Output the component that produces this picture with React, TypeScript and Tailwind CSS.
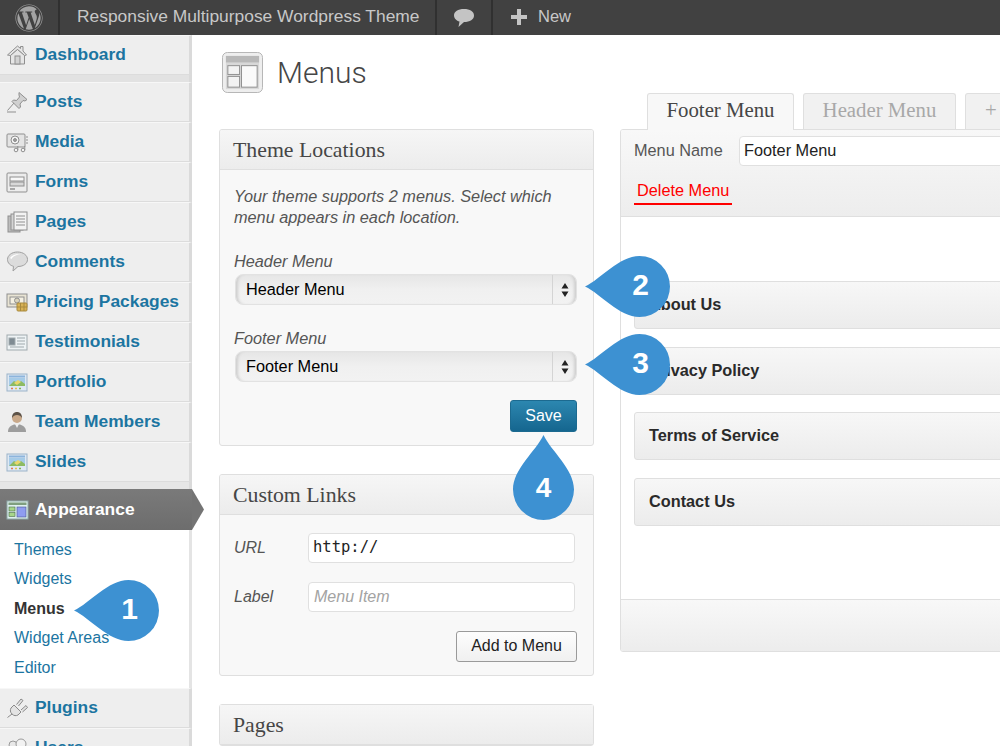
import React from 'react';
import { FaWordpress } from 'react-icons/fa';

const sans = "font-['Liberation_Sans',Arial,sans-serif]";
const serif = "font-['Liberation_Serif',Georgia,serif]";

const line = '#8f8f8f';

const icons: Record<string, React.ReactNode> = {
  home: (
    <g fill="#e6e6e6" stroke={line}>
      <path d="M1.5 12 11.5 3l3 2.5V3.5h2.500v4.500l3.500 4-2 .5-7-6-7 6z" />
      <path d="M4.500 12.500v8.500h14v-8.500l-7-6z" />
      <rect x="9" y="13" width="5" height="8" fill="#d2d2d2" />
    </g>
  ),
  pin: (
    <g stroke={line} strokeLinejoin="round">
      <path d="M13 2.500l8 7-2 1.500-2-.5-3 3.500.5 3-1.500 1.500-7-7 1.500-1.500 3 .5 3-3.500-.5-2z" fill="#d0d0d0" />
      <path d="M8 13 1.500 20.500M1 22h9" fill="none" />
    </g>
  ),
  media: (
    <g stroke={line} fill="#e4e4e4">
      <rect x="1" y="4" width="18" height="13" rx="1" />
      <circle cx="9" cy="10" r="4" fill="#f4f4f4" />
      <circle cx="9" cy="10" r="1.500" fill="#9c9c9c" />
      <path d="M20 7h2M20 10h2M20 13h2" fill="none" />
      <circle cx="10" cy="20" r="1.800" fill="#f4f4f4" />
      <circle cx="17" cy="20" r="1.800" fill="#f4f4f4" />
      <path d="M11.800 20v-4M18.800 20v-4" fill="none" />
    </g>
  ),
  forms: (
    <g stroke={line}>
      <rect x="1" y="3" width="20" height="19" rx="1" fill="#ededed" />
      <rect x="4" y="7" width="14" height="4" fill="#f8f8f8" />
      <rect x="4" y="12" width="14" height="4" fill="#d8d8d8" />
      <path d="M4 19h5" fill="none" strokeWidth="1.500" />
    </g>
  ),
  pages: (
    <g stroke={line}>
      <rect x="2" y="6" width="12" height="16" fill="#bdbdbd" />
      <rect x="5" y="4" width="12" height="16" fill="#d5d5d5" />
      <rect x="8" y="2" width="13" height="18" fill="#f3f3f3" />
      <path d="M10 6h9M10 9h9M10 12h9M10 15h9" fill="none" />
    </g>
  ),
  comment: (
    <g>
      <path d="M11.500 2C5.500 2 1.500 5.500 1.500 9.500c0 3.500 2.800 6 6 6.800L7 21l5-4.500c5.500 0 9.500-3 9.500-7S17.500 2 11.500 2z" fill="#dcdcdc" stroke="#a0a0a0" />
      <path d="M4 8c2-3 6-4.500 11-3.500-5 0-8 1.500-9.500 4.500z" fill="#fff" />
    </g>
  ),
  pricing: (
    <g stroke={line}>
      <rect x="1" y="4" width="20" height="13" fill="#e9e4d4" />
      <rect x="4" y="7" width="14" height="7" fill="#f4f0e2" />
      <circle cx="11" cy="10.500" r="2.500" fill="#d9d3bd" />
      <rect x="11" y="13" width="10" height="8" rx="1" fill="#d8b255" stroke="#a98a3e" />
      <path d="M11 17h10M14.500 13v8M18 13v8" stroke="#a98a3e" fill="none" />
    </g>
  ),
  card: (
    <g stroke="#9fa9ad">
      <rect x="1" y="5" width="20" height="15" fill="#eef3f5" />
      <rect x="3" y="8" width="6" height="7" fill="#7f8b93" />
      <path d="M11 8h8M11 11h8M11 14h8M4 17h14" fill="none" />
    </g>
  ),
  screen: (
    <g>
      <rect x="1" y="4" width="20" height="17" fill="#dfe9f3" stroke="#9cb3c9" />
      <rect x="3" y="5.500" width="16" height="2" fill="#8cb4dc" />
      <rect x="3" y="8" width="16" height="8" fill="#a5cbe8" />
      <path d="M3 16l5-5 4 2 3-2 4 3v2z" fill="#8dbb62" />
      <path d="M8 13l4-3 3 2-4 3z" fill="#e9d66b" />
      <path d="M5 18.500h2" stroke="#e07a5a" strokeWidth="1.500" />
      <path d="M9 18.500h2" stroke="#e8c14d" strokeWidth="1.500" />
      <path d="M13 18.500h2" stroke="#7fb65a" strokeWidth="1.500" />
    </g>
  ),
  team: (
    <g>
      <path d="M2 22c0-5 3-6.500 6-7.500h6c3 1 6 2.500 6 7.500z" fill="#9d9d9d" />
      <path d="M9 14l2 4 2-4z" fill="#eee" />
      <circle cx="11" cy="8" r="5" fill="#c9a98a" />
      <path d="M6 8c0-4 2-6 5-6s5 2 5 6c-1-2-3-3-5-3s-4 1-5 3z" fill="#5d5348" />
    </g>
  ),
  appearance: (
    <g>
      <rect x="1" y="3" width="21" height="18" fill="#dff1ef" stroke="#8fa9a7" />
      <rect x="2.500" y="4.500" width="18" height="2.500" fill="#7f9f7f" />
      <rect x="3" y="9" width="6" height="4" fill="#a7d68a" stroke="#4b6b4b" strokeWidth=".6" />
      <rect x="3" y="14.500" width="6" height="4" fill="#a7d68a" stroke="#4b6b4b" strokeWidth=".6" />
      <rect x="11" y="9" width="9" height="10" fill="#8f9df0" stroke="#4a568f" strokeWidth=".6" />
    </g>
  ),
  plugin: (
    <g stroke="#8a8a8a" fill="#e3e3e3" strokeLinejoin="round">
      <path d="M8 9l7 7-3 3c-2 1-4 1-6-1s-2-4-1-6z" />
      <path d="M10.500 8.500 15 3l2 1.500-4.500 5.500M15 14l5-4.500 1.500 2-5 4.500" />
      <path d="M6 18l-4.500 3.500" fill="none" />
    </g>
  ),
  users: (
    <g stroke="#9a9a9a" fill="#e8e8e8">
      <circle cx="7" cy="9" r="4" />
      <circle cx="15" cy="8" r="5" fill="#f2f2f2" />
    </g>
  ),
};

function Icon({ name }: { name: string }) {
  return (
    <svg viewBox="0 0 23 24" className="h-6 w-[23px] shrink-0">
      {icons[name]}
    </svg>
  );
}

function NavItem({ icon, label }: { icon: string; label: string }) {
  return (
    <a className="flex h-10 shrink-0 items-center gap-[6px] border-t border-b border-t-[#f7f7f7] border-b-[#dcdcdc] border-r-[3px] border-r-[#dadada] bg-[#eeeeee] pl-[6px] text-[17.400px] font-bold text-[#1c75a1]">
      <Icon name={icon} />
      <span className="pb-[2px]">{label}</span>
    </a>
  );
}

function Sidebar() {
  const top = [
    ['pin', 'Posts'],
    ['media', 'Media'],
    ['forms', 'Forms'],
    ['pages', 'Pages'],
    ['comment', 'Comments'],
    ['pricing', 'Pricing Packages'],
    ['card', 'Testimonials'],
    ['screen', 'Portfolio'],
    ['team', 'Team Members'],
    ['screen', 'Slides'],
  ];
  const sub = ['Themes', 'Widgets', 'Menus', 'Widget Areas', 'Editor'];
  return (
    <aside className="flex w-[192px] shrink-0 flex-col">
      <NavItem icon="home" label="Dashboard" />
      <div className="h-[7px] shrink-0 border-r-[3px] border-r-[#dadada] bg-[#e2e2e2]" />
      {top.map(([icon, label]) => (
        <NavItem key={label} icon={icon} label={label} />
      ))}
      <div className="h-[7px] shrink-0 border-r-[3px] border-r-[#dadada] bg-[#e6e6e6]" />
      <a className="relative flex h-[41px] shrink-0 items-center gap-[6px] bg-gradient-to-b from-[#7a7a7a] to-[#6d6d6d] pl-[6px] text-[17.400px] font-bold text-white">
        <Icon name="appearance" />
        <span>Appearance</span>
        <svg viewBox="0 0 12 41" className="absolute left-full top-0 h-[41px] w-3">
          <path d="M0 0 12 20.500 0 41z" fill="#747474" />
        </svg>
      </a>
      <div className="flex h-[158px] shrink-0 flex-col gap-[7.500px] border-r-[3px] border-r-[#e4e4e4] bg-white pl-[14px] pt-[8.500px] text-base leading-[22px] text-[#1c75a1]">
        {sub.map((s) => (
          <a key={s} className={s === 'Menus' ? 'font-bold text-[#333]' : ''}>
            {s}
          </a>
        ))}
      </div>
      <NavItem icon="plugin" label="Plugins" />
      <NavItem icon="users" label="Users" />
    </aside>
  );
}

function TopBar() {
  return (
    <header className="flex h-[35px] shrink-0 items-center bg-[#414141] text-[#c8c8c8]">
      <div className="flex h-full w-[60px] items-center justify-center border-r-2 border-r-[#303030]">
        <span className="flex h-[28px] w-[28px] items-center justify-center">
          <FaWordpress className="h-[28px] w-[28px] text-[#a3a3a3]" />
        </span>
      </div>
      <div className="flex h-full w-[377px] items-center border-r-2 border-r-[#303030] pb-[3px] pl-[17px] text-[17.400px]">
        Responsive Multipurpose Wordpress Theme
      </div>
      <div className="flex h-full w-[56px] items-center justify-center border-r-2 border-r-[#303030]">
        <svg viewBox="0 0 22 20" className="h-5 w-[22px]">
          <path d="M11 1C5 1 1 3.600 1 7.500c0 3 2.500 5.300 5.500 6L5.500 19l5.500-5c6 0 10-2.600 10-6.500S17 1 11 1z" fill="#c4c4c4" />
        </svg>
      </div>
      <div className="flex h-full items-center gap-[11px] pb-[2px] pl-[18px] text-[16.500px]">
        <svg viewBox="0 0 16 16" className="h-4 w-4">
          <path d="M6 0h4v6h6v4h-6v6H6v-6H0V6h6z" fill="#c4c4c4" />
        </svg>
        New
      </div>
    </header>
  );
}

function PanelHeader({ title }: { title: string }) {
  return (
    <div className={`flex h-[40px] items-center border-b border-b-[#dfdfdf] bg-gradient-to-b from-[#f6f6f6] to-[#ececec] pl-[13px] pt-[2px] text-[21.800px] leading-none text-[#464646] ${serif}`}>
      {title}
    </div>
  );
}

function FakeSelect({ value }: { value: string }) {
  return (
    <div className="ml-px flex h-[31px] w-[342px] items-stretch rounded-[8px] border border-[#e2e2e2] bg-gradient-to-b from-[#e6e6e6] via-[#f0f0f0] to-[#f2f2f2] text-[16.300px] text-black shadow-[inset_4px_0_3px_-2px_#cfcfcf,inset_-4px_0_3px_-2px_#cfcfcf]">
      <span className="flex flex-1 items-center pl-[10px]">{value}</span>
      <span className="flex w-[24px] flex-col items-center justify-center gap-[2px] border-l border-l-[#d4d4d4]">
        <svg viewBox="0 0 8 14" className="h-[14px] w-2">
          <path d="M4 0l3.500 5.500h-7zM4 14l-3.500-5.500h7z" fill="#222" />
        </svg>
      </span>
    </div>
  );
}

function ThemeLocations() {
  return (
    <section className="h-[317px] overflow-hidden rounded-[3px] border border-[#dfdfdf] bg-[#f8f8f8]">
      <PanelHeader title="Theme Locations" />
      <div className="px-[14px] pt-[16px] text-[16.300px] text-[#555]">
        <p className="italic leading-[21px]">
          Your theme supports 2 menus. Select which
          <br />
          menu appears in each location.
        </p>
        <p className="mb-[2px] mt-[22px] italic leading-[22px]">Header Menu</p>
        <FakeSelect value="Header Menu" />
        <p className="mb-[2px] mt-[22px] italic leading-[22px]">Footer Menu</p>
        <FakeSelect value="Footer Menu" />
        <div className="mt-[18px] flex justify-end pr-[2px]">
          <button className="flex h-[32px] w-[67px] items-center justify-center rounded-[3px] border border-[#1c6a90] bg-gradient-to-b from-[#2c87b0] to-[#15668f] text-base text-white">
            Save
          </button>
        </div>
      </div>
    </section>
  );
}

function CustomLinks() {
  return (
    <section className="mt-[28px] h-[202px] overflow-hidden rounded-[3px] border border-[#dfdfdf] bg-[#f8f8f8]">
      <PanelHeader title="Custom Links" />
      <div className="px-[14px] pt-[18px] text-base">
        <div className="flex h-[30px] items-center">
          <span className="w-[74px] italic text-[#555]">URL</span>
          <div className="flex h-[30px] w-[267px] items-center rounded-[4px] border border-[#e0e0e0] bg-white pl-[4px] font-['DejaVu_Sans_Mono',monospace] text-[15.500px] text-[#222]">
            http://
          </div>
        </div>
        <div className="mt-[19px] flex h-[30px] items-center">
          <span className="w-[74px] italic text-[#555]">Label</span>
          <div className="flex h-[30px] w-[267px] items-center rounded-[4px] border border-[#e0e0e0] bg-white pl-[5px] italic text-[#a3a3a3]">
            Menu Item
          </div>
        </div>
        <div className="mt-[19px] flex justify-end pr-[2px]">
          <button className="flex h-[31px] w-[121px] items-center justify-center rounded-[3px] border border-[#9a9a9a] bg-gradient-to-b from-[#fdfdfd] to-[#f0f0f0] pb-[2px] text-base text-[#222]">
            Add to Menu
          </button>
        </div>
      </div>
    </section>
  );
}

function Tabs() {
  return (
    <div className={`flex gap-[9px] pl-[27px] text-[20.800px] leading-none ${serif}`}>
      <div className="relative z-10 -mb-px flex h-[37px] w-[147px] items-center justify-center rounded-t-[3px] border border-b-0 border-[#dfdfdf] bg-[#f8f8f8] pb-[3px] text-[#464646]">
        Footer Menu
      </div>
      <div className="flex h-[36px] w-[153px] items-center justify-center rounded-t-[3px] border border-b-0 border-[#dfdfdf] bg-[#f1f1f1] pb-[3px] text-[#a8a8a8]">
        Header Menu
      </div>
      <div className="flex h-[36px] w-[60px] items-center rounded-t-[3px] border border-b-0 border-[#dfdfdf] bg-[#f1f1f1] pb-[3px] pl-[19px] text-[#a8a8a8]">
        +
      </div>
    </div>
  );
}

function MenuRow({ label }: { label: string }) {
  return (
    <div className="flex h-[48px] w-[400px] items-center rounded-[3px] border border-[#dfdfdf] bg-gradient-to-b from-[#f7f7f7] to-[#ececec] pb-px pl-[14px] text-[16.300px] font-bold text-[#2a2a2a]">
      {label}
    </div>
  );
}

function MenuEditor() {
  const rows = ['About Us', 'Privacy Policy', 'Terms of Service', 'Contact Us'];
  return (
    <section className="h-[523px] w-[420px] overflow-hidden rounded-[3px] border border-[#dfdfdf] bg-white">
      <div className="h-[87px] border-b border-b-[#dfdfdf] bg-gradient-to-b from-[#f8f8f8] to-[#ededed] pl-[13px] pt-[6px] text-[16.300px]">
        <div className="flex items-center">
          <span className="w-[105px] pb-[2px] text-[#555]">Menu Name</span>
          <div className="flex h-[30px] w-[300px] items-center rounded-[4px] border border-[#e0e0e0] bg-white pb-[2px] pl-[4px] text-[#222]">
            Footer Menu
          </div>
        </div>
        <a className="mt-[13px] inline-block border-b-2 border-b-[#ff0000] px-[3px] pb-[2px] leading-[22px] text-[#ff0000]">
          Delete Menu
        </a>
      </div>
      <div className="flex h-[382px] flex-col gap-[17.500px] pl-[13px] pt-[64px]">
        {rows.map((r) => (
          <MenuRow key={r} label={r} />
        ))}
      </div>
      <div className="h-[54px] border-t border-t-[#dfdfdf] bg-gradient-to-b from-[#f8f8f8] to-[#ececec]" />
    </section>
  );
}

// teardrop callouts sit over the page, tip pointing at the control they explain
function Callout({ n, className, up = false }: { n: number; className: string; up?: boolean }) {
  return (
    <div className={`absolute flex items-center justify-center ${className}`}>
      <svg viewBox="0 0 85 61" className={`absolute h-[61px] w-[85px] ${up ? 'rotate-90' : ''}`}>
        <path d="M0 30.500C16 23 34 0 54.500 0a30.500 30.500 0 0 1 0 61C34 61 16 38 0 30.500z" fill="#3d91d2" />
      </svg>
      <span className={`relative font-bold leading-none text-white ${up ? 'mt-[20px] text-[28px]' : 'mb-[4px] ml-[26px] text-[30px]'}`}>{n}</span>
    </div>
  );
}

export default function App() {
  return (
    <div className={`relative flex h-[746px] w-[1000px] flex-col overflow-hidden bg-white ${sans}`}>
      <TopBar />
      <div className="flex min-h-0 flex-1">
        <Sidebar />
        <main className="flex-1 pl-[27px] pt-[17px]">
          <div className="flex h-[41px] items-center gap-[14px]">
            <svg viewBox="0 0 42 42" className="ml-[3px] h-[41px] w-[41px]">
              <rect x=".5" y=".5" width="41" height="41" rx="5" fill="#eeeeee" stroke="#b5b5b5" />
              <rect x="4" y="4" width="34" height="7" fill="#b8b8b8" />
              <rect x="4" y="11" width="34" height="27" fill="#d8d8d8" />
              <rect x="6" y="14" width="12" height="9" fill="#f2f2f2" stroke="#8f8f8f" />
              <rect x="6" y="25" width="12" height="11" fill="#f2f2f2" stroke="#8f8f8f" />
              <rect x="20" y="14" width="16" height="22" fill="#fafafa" stroke="#8f8f8f" />
            </svg>
            <h1 className="font-['Roboto',sans-serif] text-[30px] font-light leading-none text-[#464646]">Menus</h1>
          </div>
          <div className="flex items-start gap-[26px]">
            <div className="w-[375px] shrink-0 pt-[36px]">
              <ThemeLocations />
              <CustomLinks />
              <section className="mt-[28px] rounded-[3px] border border-[#dfdfdf]">
                <PanelHeader title="Pages" />
              </section>
            </div>
            <div className="shrink-0">
              <Tabs />
              <MenuEditor />
            </div>
          </div>
        </main>
      </div>
      <Callout n={1} className="left-[74px] top-[580px] h-[61px] w-[85px]" />
      <Callout n={2} className="left-[585px] top-[256px] h-[61px] w-[85px]" />
      <Callout n={3} className="left-[585px] top-[334px] h-[61px] w-[85px]" />
      <Callout n={4} up className="left-[501px] top-[447px] h-[61px] w-[85px]" />
    </div>
  );
}
